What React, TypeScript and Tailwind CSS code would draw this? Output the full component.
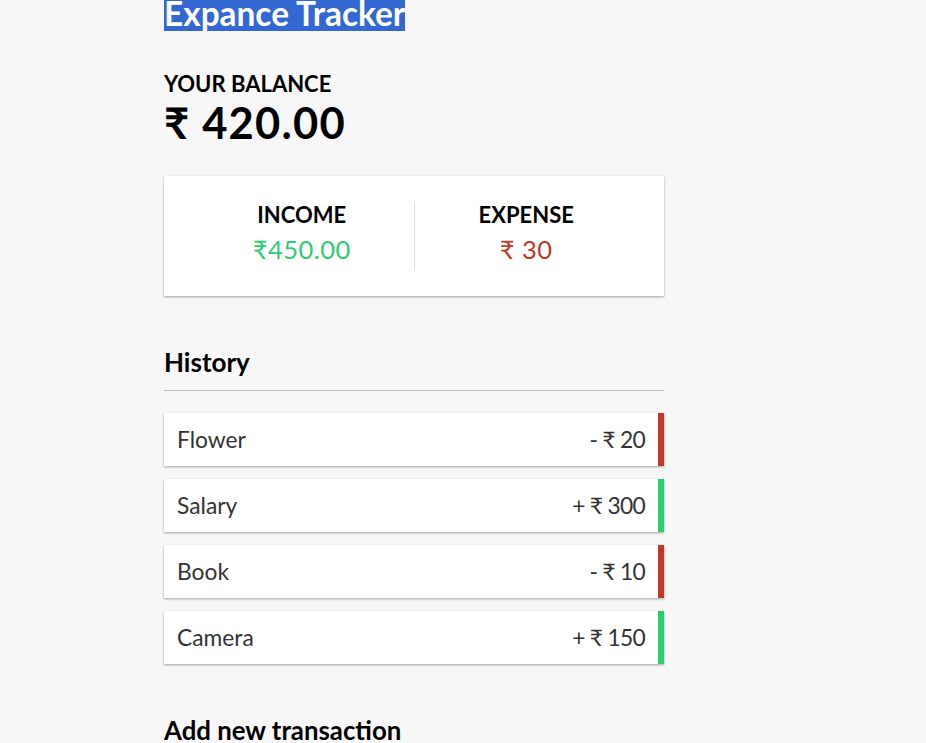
const transactions = [
  { id: 1, text: 'Flower', amount: -20 },
  { id: 2, text: 'Salary', amount: 300 },
  { id: 3, text: 'Book', amount: -10 },
  { id: 4, text: 'Camera', amount: 150 },
]

const cardShadow = 'shadow-[0_1px_3px_rgba(0,0,0,0.12),0_1px_2px_rgba(0,0,0,0.24)]'

export default function App() {
  return (
    <div className="min-h-screen bg-[#f7f7f7] font-['Lato',sans-serif] overflow-hidden">
      <div className="ml-[164px] w-[500px] mt-[-5px]">
        {/* Title (selected) */}
        <h2 className="text-[33.4px] font-bold leading-[36px] m-0">
          <span className="inline-block bg-[#3367d1] text-white leading-[36px]">Expance Tracker</span>
        </h2>

        {/* Balance */}
        <h4 className="mt-[40px] text-[22px] font-bold uppercase leading-[26px] text-black">Your Balance</h4>
        <h1 className="mt-[1px] text-[43.5px] font-bold leading-[48px] tracking-[1.2px] text-black">₹ 420.00</h1>

        {/* Income / expense */}
        <div className={`mt-[30px] flex bg-white p-[26px] ${cardShadow}`}>
          <div className="flex-1 text-center border-r border-[#dedede]">
            <h4 className="text-[22px] font-bold uppercase leading-[26px] text-black">Income</h4>
            <p className="my-[6px] text-[25.5px] leading-[30px] tracking-[0.5px] text-[#2ecc71]">₹450.00</p>
          </div>
          <div className="flex-1 text-center">
            <h4 className="text-[22px] font-bold uppercase leading-[26px] text-black">Expense</h4>
            <p className="my-[6px] text-[25.5px] leading-[30px] tracking-[0.5px] text-[#c0392b]">₹ 30</p>
          </div>
        </div>

        {/* History */}
        <h3 className="mt-[51px] border-b border-[#bbb] pb-[12px] text-[26px] font-bold leading-[31px] text-black">History</h3>
        <ul className="mt-[22px] flex flex-col gap-[13px]">
          {transactions.map((t) => (
            <li
              key={t.id}
              className={`flex h-[53px] items-center justify-between bg-white pl-[13px] pr-[13px] text-[22.8px] text-[#333] border-r-[6px] ${
                t.amount < 0 ? 'border-[#c0392b]' : 'border-[#2ecc71]'
              } ${cardShadow}`}
            >
              <span>{t.text}</span>
              <span className="tracking-[-0.7px]">
                {t.amount < 0 ? '-' : '+'} ₹ {Math.abs(t.amount)}
              </span>
            </li>
          ))}
        </ul>

        <h3 className="mt-[51px] text-[25.8px] font-bold leading-[31px] text-black">Add new transaction</h3>
      </div>
    </div>
  )
}
